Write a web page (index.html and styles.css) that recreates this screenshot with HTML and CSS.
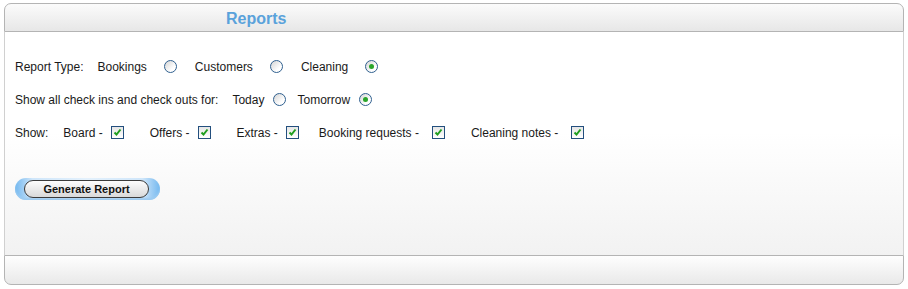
FILE: index.html
```html
<!DOCTYPE html>
<html lang="en">
<head>
    <meta charset="UTF-8">
    <title>Reports</title>
    <link rel="stylesheet" href="styles.css">
</head>
<body>
    <div class="panel">
        <div class="panel-head">
            <h2 class="title">Reports</h2>
        </div>
        <div class="panel-body">
            <div class="row">
                <span class="label">Report Type:</span>
                <span class="opt">Bookings</span><span class="radio"></span>
                <span class="opt">Customers</span><span class="radio"></span>
                <span class="opt">Cleaning</span><span class="radio on"></span>
            </div>
            <div class="row tight">
                <span class="label">Show all check ins and check outs for:</span>
                <span class="opt">Today</span><span class="radio"></span>
                <span class="opt">Tomorrow</span><span class="radio on"></span>
            </div>
            <div class="row boxes">
                <span class="label">Show:</span>
                <span class="opt">Board -</span><span class="check"><svg width="11" height="11" viewBox="0 0 11 11"><path d="M2.5 5.5 L4.5 7.5 L8.5 2.5" fill="none" stroke="#1f9e1f" stroke-width="2"/></svg></span>
                <span class="opt">Offers -</span><span class="check"><svg width="11" height="11" viewBox="0 0 11 11"><path d="M2.5 5.5 L4.5 7.5 L8.5 2.5" fill="none" stroke="#1f9e1f" stroke-width="2"/></svg></span>
                <span class="opt">Extras -</span><span class="check short"><svg width="11" height="11" viewBox="0 0 11 11"><path d="M2.5 5.5 L4.5 7.5 L8.5 2.5" fill="none" stroke="#1f9e1f" stroke-width="2"/></svg></span>
                <span class="opt wide">Booking requests -</span><span class="check"><svg width="11" height="11" viewBox="0 0 11 11"><path d="M2.5 5.5 L4.5 7.5 L8.5 2.5" fill="none" stroke="#1f9e1f" stroke-width="2"/></svg></span>
                <span class="opt wide">Cleaning notes -</span><span class="check"><svg width="11" height="11" viewBox="0 0 11 11"><path d="M2.5 5.5 L4.5 7.5 L8.5 2.5" fill="none" stroke="#1f9e1f" stroke-width="2"/></svg></span>
            </div>
            <div class="actions">
                <span class="btn-wrap"><button class="btn">Generate Report</button></span>
            </div>
        </div>
        <div class="panel-foot"></div>
    </div>
</body>
</html>
```

FILE: styles.css
```css
body {
    margin: 0;
    padding: 3px 4px;
    background: #fff;
    font-family: "Liberation Sans", Arial, sans-serif;
    font-size: 12px;
    color: #1a1a1a;
}
.panel {
    width: 900px;
}
.panel-head {
    height: 27px;
    border: 1px solid #b4b4b4;
    border-radius: 7px 7px 0 0;
    background: linear-gradient(#fbfbfb, #e7e7e7);
    display: flex;
    align-items: center;
}
.title {
    margin: 3px 0 0 221px;
    font-size: 16px;
    font-weight: bold;
    color: #5aa2db;
}
.panel-body {
    height: 205px;
    padding-top: 18px;
    border-left: 1px solid #d0d0d0;
    border-right: 1px solid #d0d0d0;
    background: linear-gradient(#fff 45%, #f2f2f2 100%);
}
.row {
    height: 33px;
    display: flex;
    align-items: center;
    padding-left: 10px;
}
.label {
    margin-right: 14px;
}
.opt {
    margin-right: 17px;
}
.radio {
    width: 11px;
    height: 11px;
    border: 1px solid #30608f;
    border-radius: 50%;
    background: linear-gradient(135deg, #d4d4d4, #fff 70%);
    margin-right: 18px;
    position: relative;
}
.radio.on::after {
    content: "";
    position: absolute;
    left: 3px;
    top: 3px;
    width: 5px;
    height: 5px;
    border-radius: 50%;
    background: #2aa52a;
}
.tight .label {
    margin-right: 14px;
}
.tight .opt {
    margin-right: 9px;
}
.tight .radio {
    margin-right: 11px;
}
.boxes .label {
    margin-right: 15px;
}
.boxes .opt {
    margin-right: 8px;
}
.boxes .opt.wide {
    margin-right: 13px;
}
.check {
    width: 11px;
    height: 11px;
    border: 1px solid #234f7e;
    background: linear-gradient(#e6e6e6, #fff);
    margin-right: 26px;
    display: flex;
}
.check.short {
    margin-right: 20px;
}
.actions {
    margin-top: 29px;
    padding-left: 10px;
}
.btn-wrap {
    display: inline-flex;
    padding: 2px 11px 2px 9px;
    border-radius: 12px;
    background: linear-gradient(90deg, #74b8ef, #cfe6fa 12%, #e4f1fc 50%, #cfe6fa 88%, #74b8ef);
    box-shadow: inset 0 -2px 2px #9ccbf1;
}
.btn {
    width: 125px;
    height: 18px;
    padding: 0;
    border: 1px solid #3c3c3c;
    border-radius: 9px;
    background: linear-gradient(#fdfdfd, #d9d9d9);
    font-family: "Liberation Sans", Arial, sans-serif;
    font-size: 11px;
    font-weight: bold;
    color: #111;
}
.panel-foot {
    height: 28px;
    border: 1px solid #b4b4b4;
    border-radius: 0 0 7px 7px;
    background: linear-gradient(#fefefe, #e9e9e9);
}
```
